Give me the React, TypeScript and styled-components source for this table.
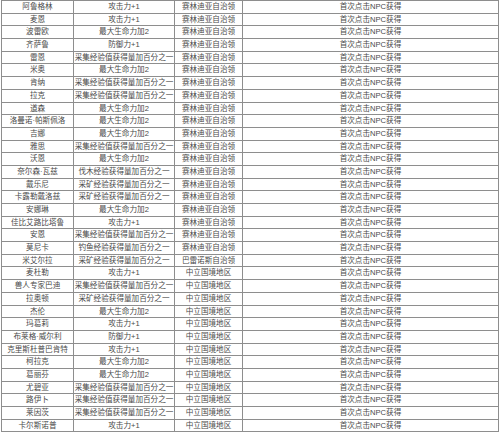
import styled, { createGlobalStyle } from "styled-components";

const GlobalStyle = createGlobalStyle`
  html, body {
    margin: 0;
    padding: 0;
    background: #ffffff;
  }
  body {
    font-family: "Liberation Sans", "Noto Sans CJK SC", sans-serif;
  }
`;

type NpcRow = [string, string, string];

const ZONE_SELINDIA = "赛林迪亚自治领";
const ZONE_BALENOS = "巴雷诺斯自治领";
const ZONE_NEUTRAL = "中立国境地区";
const HOW = "首次点击NPC获得";

const ATK = "攻击力+1";
const DEF = "防御力+1";
const HP = "最大生命力加2";
const GATHER = "采集经验值获得量加百分之一";
const MINING = "采矿经验获得量加百分之一";
const LOGGING = "伐木经验获得量加百分之一";
const FISHING = "钓鱼经验获得量加百分之一";

const rows: NpcRow[] = [
  ["阿鲁格林", ATK, ZONE_SELINDIA],
  ["麦恩", ATK, ZONE_SELINDIA],
  ["波雷欧", HP, ZONE_SELINDIA],
  ["齐萨鲁", DEF, ZONE_SELINDIA],
  ["雷恩", GATHER, ZONE_SELINDIA],
  ["米奥", HP, ZONE_SELINDIA],
  ["肯纳", GATHER, ZONE_SELINDIA],
  ["拉克", GATHER, ZONE_SELINDIA],
  ["道森", HP, ZONE_SELINDIA],
  ["洛曼诺·帕斯佩洛", HP, ZONE_SELINDIA],
  ["吉娜", HP, ZONE_SELINDIA],
  ["雅思", GATHER, ZONE_SELINDIA],
  ["沃恩", HP, ZONE_SELINDIA],
  ["奈尔森·瓦兹", LOGGING, ZONE_SELINDIA],
  ["戴乐尼", MINING, ZONE_SELINDIA],
  ["卡露勒戴洛兹", MINING, ZONE_SELINDIA],
  ["安娜琳", HP, ZONE_SELINDIA],
  ["佳比艾路比塔鲁", ATK, ZONE_SELINDIA],
  ["安恩", GATHER, ZONE_SELINDIA],
  ["莫尼卡", FISHING, ZONE_SELINDIA],
  ["米艾尔拉", MINING, ZONE_BALENOS],
  ["麦杜勒", ATK, ZONE_NEUTRAL],
  ["兽人专家巴迪", GATHER, ZONE_NEUTRAL],
  ["拉奥顿", MINING, ZONE_NEUTRAL],
  ["杰伦", HP, ZONE_NEUTRAL],
  ["玛葛莉", ATK, ZONE_NEUTRAL],
  ["布莱格·威尔利", DEF, ZONE_NEUTRAL],
  ["克里斯杜普巴肯特", ATK, ZONE_NEUTRAL],
  ["柯拉克", HP, ZONE_NEUTRAL],
  ["葛丽芬", HP, ZONE_NEUTRAL],
  ["尤碧亚", GATHER, ZONE_NEUTRAL],
  ["路伊卜", GATHER, ZONE_NEUTRAL],
  ["莱因茨", GATHER, ZONE_NEUTRAL],
  ["卡尔斯诺普", ATK, ZONE_NEUTRAL],
];

const Page = styled.div`
  padding-left: 1px;
  width: 498px;
`;

const Table = styled.div`
  border-top: 1px solid #8e8e8e;
  border-left: 1px solid #8e8e8e;
`;

const Row = styled.div`
  display: grid;
  grid-template-columns: 72px 101px 68px 1fr;
  height: 12.7px;
`;

const Cell = styled.div`
  box-sizing: border-box;
  border-right: 1px solid #8e8e8e;
  border-bottom: 1px solid #8e8e8e;
  display: flex;
  align-items: center;
  justify-content: center;
  overflow: hidden;
  font-size: 7.6px;
  line-height: 1;
  color: #4a4a4a;
  white-space: nowrap;
`;

export default function App() {
  return (
    <>
      <GlobalStyle />
      <Page>
        <Table>
          {rows.map(([name, bonus, zone]) => (
            <Row key={name}>
              <Cell>{name}</Cell>
              <Cell>{bonus}</Cell>
              <Cell>{zone}</Cell>
              <Cell>{HOW}</Cell>
            </Row>
          ))}
        </Table>
      </Page>
    </>
  );
}
